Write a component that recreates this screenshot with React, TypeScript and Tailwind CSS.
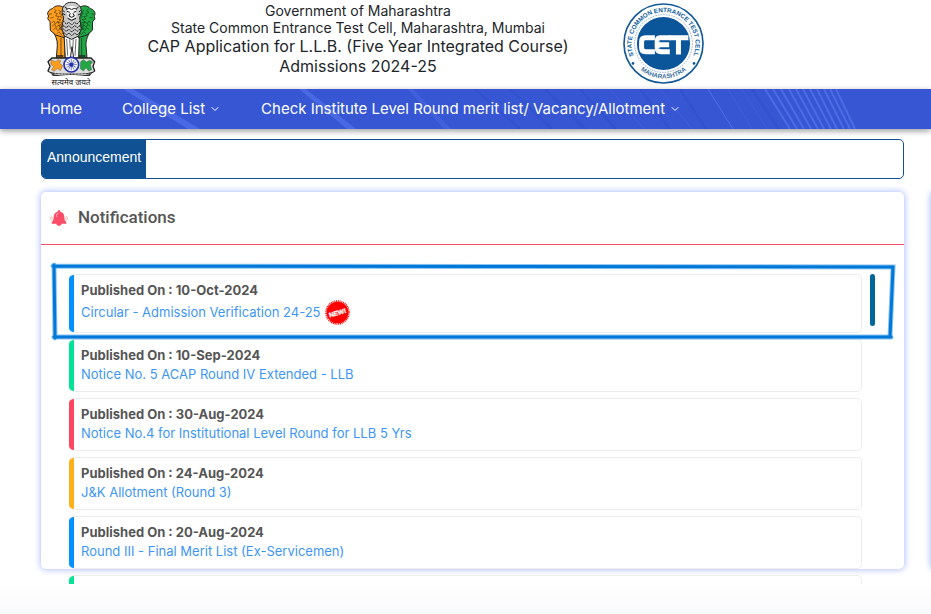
import React from "react";
import { ChevronDown } from "lucide-react";

interface Notice {
  date: string;
  title: string;
  accent: string;
  isNew?: boolean;
}

const notices: Notice[] = [
  { date: "10-Oct-2024", title: "Circular - Admission Verification 24-25", accent: "bg-[#0090ff]", isNew: true },
  { date: "10-Sep-2024", title: "Notice No. 5 ACAP Round IV Extended - LLB", accent: "bg-[#00e396]" },
  { date: "30-Aug-2024", title: "Notice No.4 for Institutional Level Round for LLB 5 Yrs", accent: "bg-[#ff4560]" },
  { date: "24-Aug-2024", title: "J&K Allotment (Round 3)", accent: "bg-[#feb019]" },
  { date: "20-Aug-2024", title: "Round III - Final Merit List (Ex-Servicemen)", accent: "bg-[#0090ff]" },
  { date: "", title: "", accent: "bg-[#00e396]" },
];

// State emblem: three lions on a drum with the chakra
function Emblem() {
  return (
    <svg viewBox="50 0 150 264" className="h-[88px] w-[50px] shrink-0" role="img" aria-label="State emblem">
      <g stroke="#222" strokeWidth="3">
        {/* legs */}
        <path d="M66 88c8 18 16 30 15 48l-3 38h26V94z" fill="#ff9d1c" />
        <path d="M182 88c-8 18-16 30-15 48l3 38h-26V94z" fill="#22a745" />
        <path d="M101 104h46l-2 70h-15l-5-34-5 34h-15z" fill="#fff" />
        {/* side lions */}
        <path d="M99 22c-12-7-25-6-33 4-8 1-15 9-14 17l3 5-3 8 7 9 1 26 16 14 26 8z" fill="#ff9d1c" />
        <path d="M147 22c12-7 25-6 33 4 8 1 15 9 14 17l-3 5 3 8-7 9-1 26-16 14-26 8z" fill="#22a745" />
        {/* front lion mane */}
        <path d="M104 14c7-9 31-10 40 0 11 9 11 25 4 38l5 34-8 22-21 10-22-10-8-23 6-33c-7-13-6-29 4-38z" fill="#c9c9c9" />
      </g>
      {/* face */}
      <path d="M109 24c8-8 23-8 31 0l-3 26-13 9-12-9z" fill="#f4f4f4" />
      <g fill="none" stroke="#111" strokeWidth="3">
        <path d="M108 29c6-6 12-4 16 1 4-5 10-7 16-1M110 34l8 3m20-3-8 3M120 40l-4 8 8 4 8-4-4-8M112 55l12 6 13-6" />
        <path d="M98 62l10 10 8-5 8 8 8-8 8 5 10-10M96 73l11 10 9-6 8 8 9-8 9 6 10-10M96 84l11 10 9-6 8 8 9-8 9 6 9-10M99 96l10 9 7-6 8 8 9-8 7 6 9-9" strokeDasharray="6 2" />
        <path d="M103 20l8 7m-8 9-6-5m8 14-7-4M145 20l-7 7m8 9 5-5m-8 14 8-4" />
      </g>
      <g fill="none" stroke="#5c3b0a" strokeWidth="2">
        <path d="M56 43l9-2m-5 13 10-2M72 27l6 5-7 5 10 4-5 7 11 2-7 7 12 2-10 8 16 2-13 8 15 2-14 7 13 4" />
        <path d="M64 68l7-5 4 9 7-8 4 9M66 78l8-5 4 9 7-7 5 9 6-6M69 89l8-6 5 9 8-7 6 8M80 101l6-6 6 9 7-6M84 31l8 4-6 5 9 4-5 6 7 4" />
      </g>
      <g fill="none" stroke="#0d4a1c" strokeWidth="2">
        <path d="M191 43l-9-2m5 13-11-2M175 27l-6 5 7 5-10 4 5 7-11 2 7 7-12 2 10 8-16 2 13 8-15 2 14 7-13 4" />
        <path d="M182 68l-7-5-4 9-7-8-4 9M180 78l-8-5-4 9-7-7-5 9-6-6M177 89l-8-6-5 9-8-7-6 8M166 101l-6-6-6 9-7-6M162 31l-8 4 6 5-9 4 5 6-7 4" />
      </g>
      <g fill="none" stroke="#222" strokeWidth="2">
        <path d="M92 114v54m62-54v54M109 117l3 50m25-50-3 50M118 118l2 30m9-30-2 30" />
        <path d="M80 168h19m47 0h19" strokeWidth="4" />
      </g>
      {/* drum */}
      <path d="M65 174h117l11 11-5 14 5 14c-8 13-132 13-140 0l6-14-6-14z" fill="#ddd" stroke="#222" strokeWidth="4" />
      <path d="M62 179l14 6 7-6 8 3-3 8 9 7-7 15-8-7-11 9-7-5 6-9-8-7z" fill="#ff9d1c" stroke="#333" />
      <path d="M151 185l8-6 10 7 9-5 9 5-7 8 4 15-9 4-8-10-8 10-9-7z" fill="#22a745" stroke="#333" />
      <circle cx="123" cy="194" r="22" fill="#fff" stroke="#2331a5" strokeWidth="5" />
      {[0, 30, 60, 90, 120, 150].map((a) => (
        <path key={a} d="M106 194h34" transform={`rotate(${a} 123 194)`} stroke="#3946b3" strokeWidth="2" />
      ))}
      <circle cx="123" cy="194" r="6" fill="#2331a5" />
      <path d="M60 218c27 13 99 13 126 0l-8 10H68z" fill="#333" />
      <path d="M72 222h103" stroke="#ccc" strokeWidth="3" strokeDasharray="6 4" />
      <text x="122" y="255" textAnchor="middle" fontSize="24" fill="#111" className="font-['Noto_Sans',sans-serif]">
        सत्यमेव जयते
      </text>
    </svg>
  );
}

function CetLogo() {
  return (
    <svg viewBox="25 10 244 244" className="size-[81px] shrink-0" role="img" aria-label="CET Cell">
      <defs>
        <path id="ring-top" d="M63 180A96 96 0 1 1 231 180" />
        <path id="ring-bottom" d="M52 178A106 106 0 0 0 242 178" />
      </defs>
      <circle cx="147" cy="132" r="119" fill="#fff" stroke="#155a97" strokeWidth="5" />
      <circle cx="147" cy="132" r="87" fill="none" stroke="#5c8fbd" strokeWidth="2" strokeDasharray="5 3" />
      <circle cx="147" cy="132" r="80" fill="#0b559b" />
      <g className="font-['Liberation_Sans',sans-serif] font-bold" fill="#0f609e">
        <text fontSize="19" textAnchor="middle">
          <textPath href="#ring-top" startOffset="50%">STATE COMMON ENTRANCE TEST CELL</textPath>
        </text>
        <text fontSize="19" textAnchor="middle" fill="#3d6f9c">
          <textPath href="#ring-bottom" startOffset="50%">MAHARASHTRA</textPath>
        </text>
      </g>
      <circle cx="55" cy="192" r="4" fill="#0b559b" />
      <circle cx="239" cy="192" r="4" fill="#0b559b" />
      {/* CET monogram */}
      <g fill="none" stroke="#fff" strokeWidth="15">
        <path d="M121 115H93q-12 0-12 12v18q0 12 12 12h28" />
        <path d="M168 115h-32q-8 0-8 12v18q0 12 12 12h26M128 136h36" />
        <path d="M164 115h58M192 115v50" />
      </g>
      <path d="M132 125h34M132 147h34" stroke="#0b559b" strokeWidth="2" />
    </svg>
  );
}

function BellIcon() {
  return (
    <svg viewBox="0 0 54 48" className="h-4 w-[18px]" aria-hidden="true">
      <path d="M27 1c3 0 4 2 4 4 9 2 12 9 12 17 0 8 2 12 6 14v5H35c-1 4-4 6-8 6s-7-2-8-6H5v-5c4-2 6-6 6-14 0-8 3-15 12-17 0-2 1-4 4-4z" fill="#fa4d68" />
      <path d="M19 20c0-6 2-9 6-10" stroke="#fff" strokeWidth="2" fill="none" />
      <g fill="none" stroke="#f5a08c" strokeWidth="2">
        <ellipse cx="4" cy="25" rx="3" ry="5" />
        <ellipse cx="50" cy="25" rx="3" ry="5" />
      </g>
    </svg>
  );
}

function NewBadge() {
  return (
    <svg viewBox="0 0 76 76" className="size-[25px]" role="img" aria-label="New">
      <circle cx="38" cy="38" r="33" fill="#f00" />
      <circle cx="38" cy="38" r="35" fill="none" stroke="#f00" strokeWidth="5" strokeDasharray="3 2.5" />
      <text x="38" y="46" textAnchor="middle" fontSize="20" fill="#fff" stroke="#fff" transform="rotate(-16 38 38)" className="font-['Liberation_Sans',sans-serif] font-bold">
        NEW!
      </text>
    </svg>
  );
}

function NavStreaks() {
  return (
    <svg viewBox="0 0 931 40" preserveAspectRatio="none" className="absolute inset-0 h-full w-full" aria-hidden="true">
      <path d="M123 0h10l67 40h-12zM299 0h7l50 40h-9z" fill="#4968e3" />
      <path d="M408 0h5l38 40h-7z" fill="#4160db" />
      <g fill="none" stroke="#3251ce" strokeWidth="2">
        <path d="M475 0l45 40M510 0l42 40M545 0l40 40M580 0l36 40M640 0l30 40M680 0l26 40M752 0l27 40" />
      </g>
      <g fill="none" stroke="#405fdb">
        <path d="M610 0l34 40M660 0l32 40M728 0l24 40M742 0l25 40" />
        <path d="M708 0l25 40" stroke="#5070e5" />
        <path d="M765 0l25 40M773 0l24 40M781 0l23 40M789 0l22 40M796 0l22 40M803 0l21 40M810 0l21 40M817 0l20 40M824 0l20 40M830 0l20 40M836 0l19 40" stroke="#4c6ce6" strokeWidth="2" />
      </g>
    </svg>
  );
}

function NoticeItem({ date, title, accent, isNew }: Notice) {
  return (
    <li className="flex shrink-0 overflow-hidden rounded-[5px] border border-l-0 border-[#ececec] bg-white">
      <span className={`w-[5px] shrink-0 ${accent}`}></span>
      <div className="min-h-[51px] px-[7px] pt-[6px] pb-[7px] text-[13px] leading-[19px]">
        {date && (
          <>
            <p className="font-bold text-[#555]">Published On : {date}</p>
            <a href="#" className="flex items-center gap-1 text-[#3d96f5]">
              {title}
              {isNew && <NewBadge />}
            </a>
          </>
        )}
      </div>
    </li>
  );
}

export default function App() {
  return (
    <div className="min-h-screen overflow-hidden bg-white font-['Inter',sans-serif]">
      <header className="flex h-[89px] items-start pl-[47px]">
        <Emblem />
        <div className="w-[522px] shrink-0 pt-[2px] text-center text-[#212529]">
          <p className="text-[14px] leading-[17px]">Government of Maharashtra</p>
          <p className="text-[14px] leading-[17px]">State Common Entrance Test Cell, Maharashtra, Mumbai</p>
          <h1 className="text-[16px] leading-[20px]">
            CAP Application for L.L.B. (Five Year Integrated Course)
            <br />
            Admissions 2024-25
          </h1>
        </div>
        <div className="ml-1 pt-[3px]">
          <CetLogo />
        </div>
      </header>

      <nav className="relative h-10 bg-[#3656d3] shadow-[0_2px_6px_rgba(0,0,0,0.4)]">
        <NavStreaks />
        <div className="relative flex h-full items-center gap-10 pl-10 text-[15px] whitespace-nowrap text-white">
          <a href="#">Home</a>
          <button type="button" className="flex items-center gap-1">
            College List <ChevronDown className="size-3" />
          </button>
          <button type="button" className="flex items-center gap-1">
            Check Institute Level Round merit list/ Vacancy/Allotment <ChevronDown className="size-3" />
          </button>
        </div>
      </nav>

      <main className="flex gap-[27px] pt-[10px] pl-[41px]">
        <div className="min-w-0 flex-1">
          <div className="flex h-10 overflow-hidden rounded-[5px] border border-[#0f5193] bg-white">
            <span className="bg-[#0f5193] px-[5px] pt-[7px] font-['Liberation_Sans',sans-serif] text-[14px] leading-5 text-white">
              Announcement
            </span>
          </div>

          <section className="mt-[13px] flow-root rounded-[5px] bg-white shadow-[0_0_6px_1px_#b4c2ff]">
            <div className="flex h-[53px] items-center gap-[10px] border-b border-[#fa4d68] pl-[9px]">
              <BellIcon />
              <h2 className="font-['Roboto',sans-serif] text-[17px] font-medium text-[#555]">Notifications</h2>
            </div>
            <div className="relative pt-[29px] pr-[29px] pl-7">
              {/* the list runs a little past the card */}
              <div className="-mb-[15px] flex h-[310px] gap-2 overflow-hidden">
                <ul className="flex flex-1 flex-col gap-[6px]">
                  {notices.map((notice, i) => (
                    <NoticeItem key={i} {...notice} />
                  ))}
                </ul>
                <div className="h-[52px] w-[5px] rounded-full bg-[#069]"></div>
              </div>
              {/* hand drawn frame round the latest notice */}
              <svg
                viewBox="0 0 863 90"
                preserveAspectRatio="none"
                className="pointer-events-none absolute top-[10px] left-0 h-[90px] w-full"
                aria-hidden="true"
              >
                <g fill="none" strokeLinecap="round">
                  <path d="M12 11L852 12L849 82M13 10L14 83M13 82L850 82" stroke="#8cc4f2" strokeWidth="5" />
                  <path d="M12 11L852 12L849 82M13 10L14 83M13 82L850 82" stroke="#0078d7" strokeWidth="3" />
                </g>
              </svg>
            </div>
          </section>
        </div>
        <aside className="mt-[53px] -mr-4 w-4 shrink-0 rounded-[5px] bg-white shadow-[0_0_6px_1px_#b4c2ff]"></aside>
      </main>

      <footer className="mt-[15px] h-[30px] bg-gradient-to-b from-white to-[#f8f9fa]"></footer>
    </div>
  );
}
